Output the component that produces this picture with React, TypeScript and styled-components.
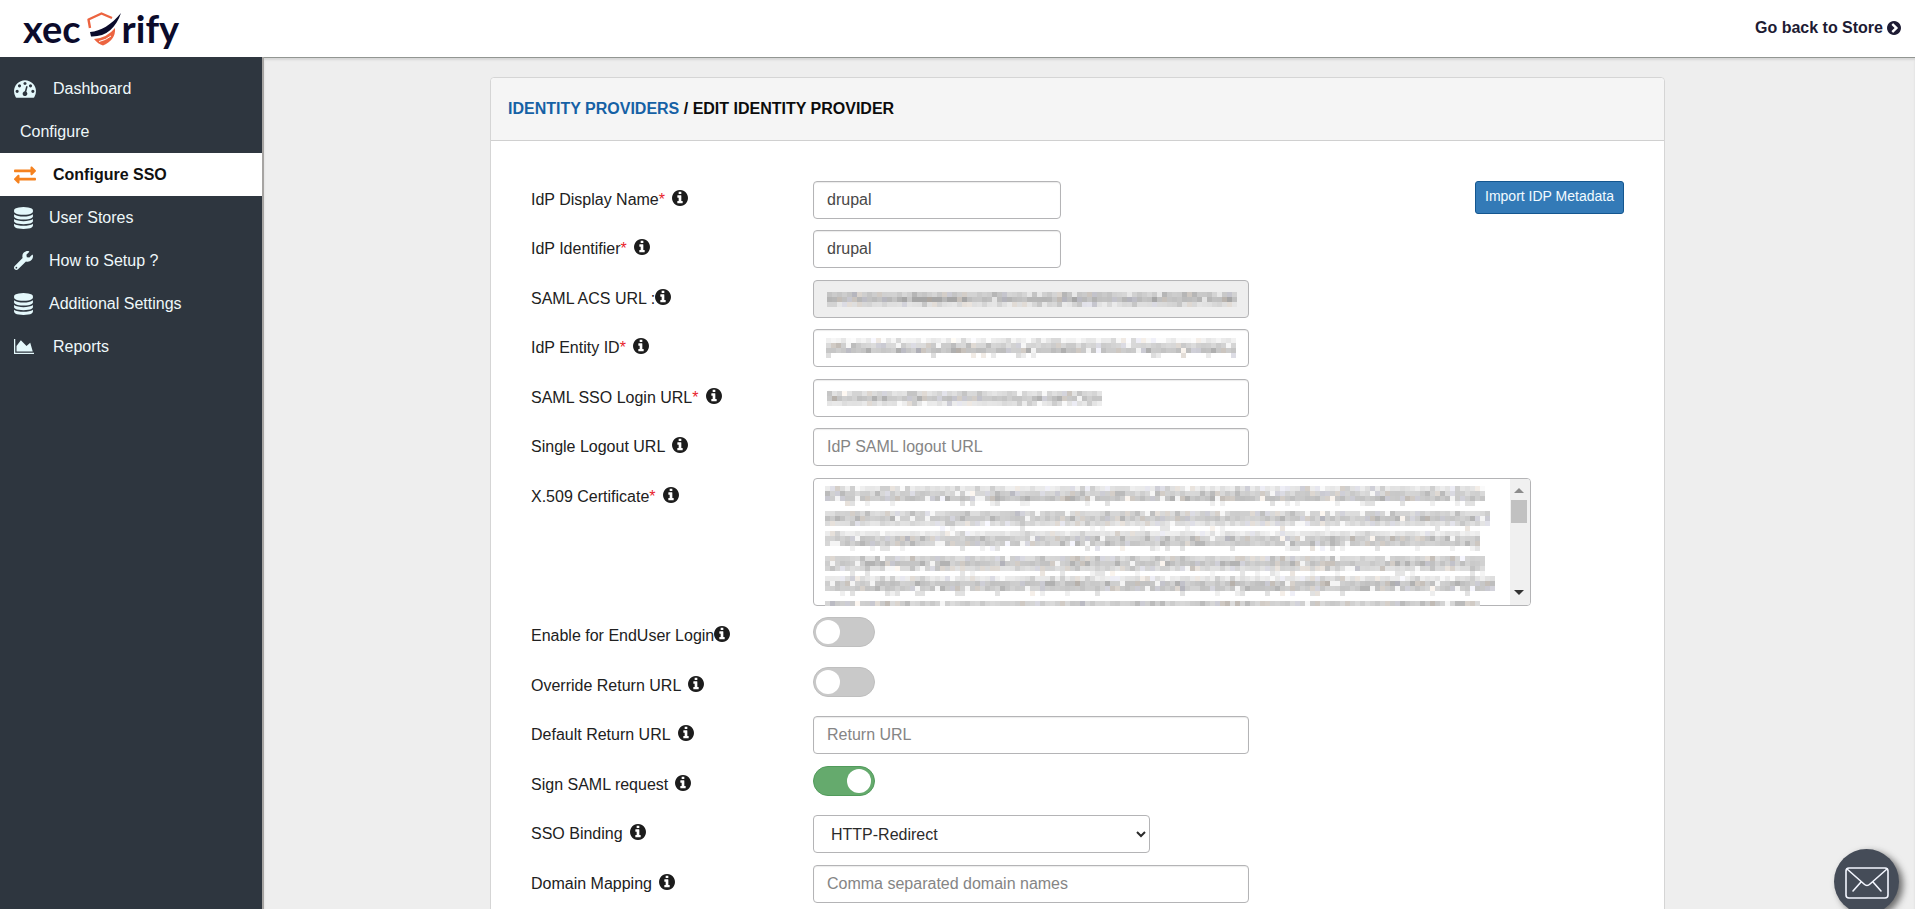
import React from "react";
import styled, { createGlobalStyle } from "styled-components";
import { FaExchangeAlt, FaWrench } from "react-icons/fa";

const GlobalStyle = createGlobalStyle`
  *, *::before, *::after { box-sizing: border-box; }
  body {
    margin: 0;
    font-family: "Liberation Sans", Arial, Helvetica, sans-serif;
    font-size: 16px;
    line-height: 22px;
    color: #212121;
    background: #eeeeee;
  }
  input, textarea, select, button { font: inherit; color: inherit; margin: 0; }
`;

/* ---------- shell ---------- */

const Shell = styled.div`
  display: flex;
  flex-direction: column;
  height: 100vh;
  overflow: hidden;
`;

const TopBar = styled.header`
  display: flex;
  flex: none;
  align-items: center;
  justify-content: space-between;
  height: 57px;
  padding: 0 14px 0 23px;
  background: #ffffff;
`;

const Brand = styled.a`
  display: flex;
  align-items: center;
  padding-bottom: 2px;
  color: #0b0b2b;
  font-family: Lato, sans-serif;
  font-weight: 700;
  font-size: 38px;
  line-height: 50px;
  text-decoration: none;
`;

const BrandMark = styled.svg`
  width: 36px;
  height: 36px;
  margin-left: 5px;
`;

const StoreLink = styled.a`
  display: flex;
  align-items: center;
  gap: 4px;
  color: #1d1b33;
  font-weight: 700;
  text-decoration: none;
  padding-bottom: 2px;
`;

const Columns = styled.div`
  display: flex;
  flex: 1;
  min-height: 0;
`;

const SideBar = styled.nav`
  flex: none;
  width: 264px;
  padding-top: 10px;
  background: #2e363f;
  border-right: 2px solid #a6a4a2;
`;

const NavItem = styled.a<{ $active?: boolean; $wide?: boolean }>`
  display: flex;
  align-items: center;
  gap: ${(p) => (p.$wide ? 17 : 16)}px;
  height: 43px;
  padding-left: 14px;
  color: ${(p) => (p.$active ? "#111111" : "#eef8fa")};
  background: ${(p) => (p.$active ? "#ffffff" : "transparent")};
  font-weight: ${(p) => (p.$active ? 700 : 400)};
  text-decoration: none;
  svg {
    flex: none;
    color: ${(p) => (p.$active ? "#f5821f" : "#e4f8fb")};
  }
`;

const NavHeading = styled.div`
  display: flex;
  align-items: center;
  height: 43px;
  padding-left: 20px;
  color: #eef8fa;
`;

const Main = styled.main`
  flex: 1;
  min-width: 0;
  padding: 19px 250px 0 226px;
  overflow-y: auto;
  scrollbar-width: none;
  border-top: 1px solid #929692;
  box-shadow: inset 0 2px 2px #d6d6d6;
`;

/* ---------- panel ---------- */

const Panel = styled.section`
  background: #ffffff;
  border: 1px solid #d5d5d5;
  border-radius: 4px;
`;

const PanelHeader = styled.h1`
  margin: 0;
  padding: 20px 17px;
  font-size: 16px;
  line-height: 22px;
  font-weight: 700;
  color: #0c0c0c;
  background: #f5f5f5;
  border-bottom: 1px solid #d0d0d0;
  border-radius: 4px 4px 0 0;
  a {
    color: #1561a5;
    text-decoration: none;
  }
`;

const Form = styled.form`
  padding: 40px 40px 28px;
`;

const Row = styled.div`
  display: flex;
  align-items: flex-start;
  padding-bottom: 11px;
  &:nth-child(even) {
    padding-bottom: 12px;
  }
`;

const Label = styled.label<{ $tight?: boolean }>`
  display: flex;
  flex: none;
  align-items: center;
  gap: ${(p) => (p.$tight ? 0 : 7)}px;
  width: 282px;
  height: 38px;
  em {
    color: #e8232b;
    font-style: normal;
  }
  svg {
    flex: none;
    color: #1c1c1c;
    margin-bottom: 4px;
  }
`;

const ControlSlot = styled.div`
  position: relative;
  display: flex;
  min-height: 38px;
`;

const TextBox = styled.input<{ $short?: boolean }>`
  width: ${(p) => (p.$short ? 248 : 436)}px;
  height: 38px;
  padding: 0 13px;
  color: #484848;
  background: #ffffff;
  border: 1px solid #b4b4b6;
  border-radius: 4px;
  box-shadow: inset 0 1px 1px #ececec;
  &::placeholder {
    color: #858585;
    opacity: 1;
  }
  &:read-only {
    background: #eeeeee;
  }
`;

const Select = styled.select`
  width: 337px;
  height: 38px;
  padding: 0 13px;
  color: #2b2b2b;
  background: #ffffff;
  border: 1px solid #b4b4b6;
  border-radius: 4px;
`;

const CertificateBox = styled.textarea`
  width: 718px;
  height: 128px;
  padding: 6px 12px;
  background: #ffffff;
  border: 1px solid #b4b4b6;
  border-radius: 4px;
  resize: none;
  overflow: hidden;
`;

const Toggle = styled.input`
  appearance: none;
  position: relative;
  width: 62px;
  height: 30px;
  background: #c9c9c9;
  border: 1px solid #bfbfbf;
  border-radius: 15px;
  &::before {
    content: "";
    position: absolute;
    top: 2px;
    left: 2px;
    width: 24px;
    height: 24px;
    border-radius: 50%;
    background: #ffffff;
  }
  &:checked {
    background: #65aa6d;
    border-color: #519b5b;
  }
  &:checked::before {
    left: 33px;
  }
`;

const ImportButton = styled.button`
  flex: none;
  width: 149px;
  height: 33px;
  margin-left: auto;
  padding: 0 0 3px;
  font-size: 14px;
  line-height: 20px;
  white-space: nowrap;
  color: #f2fbff;
  background: #337ab7;
  border: 1px solid #14568f;
  border-radius: 3px;
`;

const MaskLayer = styled.svg<{ $top: number; $left: number }>`
  position: absolute;
  top: ${(p) => p.$top}px;
  left: ${(p) => p.$left}px;
  pointer-events: none;
`;

const ScrollTrack = styled.div`
  position: absolute;
  top: 1px;
  right: 1px;
  display: flex;
  flex-direction: column;
  align-items: center;
  justify-content: space-between;
  width: 20px;
  height: 126px;
  padding: 9px 2px 10px 0;
  background: #f0f0f0;
  border-radius: 0 3px 3px 0;
`;

const ScrollThumb = styled.div`
  width: 16px;
  height: 23px;
  margin: 7px 0 auto;
  background: #c1c1c1;
`;

const MailButton = styled.button`
  position: fixed;
  right: 16px;
  bottom: -5px;
  display: flex;
  align-items: center;
  justify-content: center;
  width: 65px;
  height: 65px;
  padding: 2px 0 0;
  color: #f3f6ff;
  background: #454c58;
  border: 0;
  border-radius: 50%;
  box-shadow: 4px 3px 7px #6a6a6a;
`;

/* ---------- icons ---------- */

const Icon = ({ d, box, w, h }: { d: string; box: string; w: number; h: number }) => (
  <svg viewBox={box} width={w} height={h} fill="currentColor" aria-hidden="true">
    <path d={d} />
  </svg>
);

const GaugeIcon = () => (
  <Icon
    box="0 256 1792 1408"
    w={22}
    h={18}
    d="M384 1152q0-53-37.5-90.5t-90.5-37.5-90.5 37.5-37.5 90.5 37.5 90.5 90.5 37.5 90.5-37.5 37.5-90.5zm192-448q0-53-37.5-90.5t-90.5-37.5-90.5 37.5-37.5 90.5 37.5 90.5 90.5 37.5 90.5-37.5 37.5-90.5zm428 481l101-382q6-26-7.500-48.500t-38.500-29.500-48 6.500-30 39.500l-101 382q-60 5-107 43.500t-63 98.500q-20 77 20 146t117 89 146-20 89-117q16-60-6-117t-72-91zm660-33q0-53-37.500-90.500t-90.500-37.500-90.500 37.500-37.500 90.500 37.500 90.500 90.500 37.500 90.500-37.500 37.500-90.500zm-640-640q0-53-37.500-90.500t-90.500-37.500-90.500 37.500-37.500 90.500 37.500 90.500 90.500 37.500 90.500-37.500 37.500-90.500zm448 192q0-53-37.500-90.500t-90.500-37.500-90.500 37.500-37.500 90.500 37.500 90.500 90.500 37.500 90.500-37.500 37.500-90.500zm320 448q0 261-141 483-19 29-54 29h-1402q-35 0-54-29-141-221-141-483 0-182 71-348t191-286 286-191 348-71 348 71 286 191 191 286 71 348z"
  />
);

const DatabaseIcon = () => (
  <Icon
    box="0 0 1536 1792"
    w={19}
    h={22}
    d="M768 768q237 0 443-43t325-127v170q0 69-103 128t-280 93.500-385 34.500-385-34.500-280-93.500-103-128v-170q119 84 325 127t443 43zm0 768q237 0 443-43t325-127v170q0 69-103 128t-280 93.500-385 34.500-385-34.500-280-93.500-103-128v-170q119 84 325 127t443 43zm0-384q237 0 443-43t325-127v170q0 69-103 128t-280 93.500-385 34.500-385-34.500-280-93.500-103-128v-170q119 84 325 127t443 43zm0-1152q208 0 385 34.500t280 93.500 103 128v128q0 69-103 128t-280 93.500-385 34.500-385-34.500-280-93.500-103-128v-128q0-69 103-128t280-93.500 385-34.500z"
  />
);

const ChartIcon = () => (
  <Icon
    box="0 128 2253 1536"
    w={22}
    h={15}
    d="M2048 1536v128h-2048v-1536h128v1408h1920zm-384-1024l256 896h-1664v-576l448-576 576 576z"
  />
);

const InfoIcon = () => (
  <Icon
    box="128 128 1536 1536"
    w={16}
    h={16}
    d="M1152 1376v-160q0-14-9-23t-23-9h-96v-512q0-14-9-23t-23-9h-320q-14 0-23 9t-9 23v160q0 14 9 23t23 9h96v320h-96q-14 0-23 9t-9 23v160q0 14 9 23t23 9h448q14 0 23-9t9-23zm-128-896v-160q0-14-9-23t-23-9h-192q-14 0-23 9t-9 23v160q0 14 9 23t23 9h192q14 0 23-9t9-23zm640 416q0 209-103 385.500t-279.500 279.500-385.500 103-385.500-103-279.500-279.500-103-385.500 103-385.500 279.500-279.500 385.500-103 385.500 103 279.500 279.500 103 385.500z"
  />
);

const ChevronCircleIcon = () => (
  <Icon
    box="128 128 1536 1536"
    w={14}
    h={14}
    d="M845 1395l454-454q19-19 19-45t-19-45l-454-454q-19-19-45-19t-45 19l-102 102q-19 19-19 45t19 45l307 307-307 307q-19 19-19 45t19 45l102 102q19 19 45 19t45-19zm819-499q0 209-103 385.500t-279.500 279.500-385.500 103-385.500-103-279.500-279.500-103-385.500 103-385.500 279.500-279.500 385.500-103 385.500 103 279.500 279.500 103 385.500z"
  />
);

const Shield = () => (
  <BrandMark viewBox="0 0 36 36" fill="none" aria-hidden="true">
    <path d="M4 18 L2.500 9.500 L15.500 3.500 L26 8" stroke="#ec6440" strokeWidth="2.400" strokeLinejoin="round" />
    <path d="M4 22 C15 21 25 15 35 3 C30 18 20 27 5 26.500 Z" fill="#0b0b2b" />
    <path d="M8 29 Q21 28 29 18 Q30 30 17 35.500 Q12 34 8 29 Z" fill="#ec6440" />
    <path d="M13 31.500 Q20 30 25 26" stroke="#ffffff" strokeWidth="1" />
  </BrandMark>
);

/* ---------- pixelated masks over private values ---------- */

type MaskLine = { y: number; cols: number; bands: number[]; seed: number };

const CELL = 5;

// A stable scatter value between 0 and 1 for a cell.
const noise = (x: number, y: number, seed: number) => {
  const v = Math.sin(x * 12.9898 + y * 78.233 + seed * 37.719) * 43758.5453;
  return v - Math.floor(v);
};

const Mask = ({ top, left, lines, base = 255 }: { top: number; left: number; lines: MaskLine[]; base?: number }) => {
  const width = Math.max(...lines.map((l) => l.cols)) * CELL;
  const height = Math.max(...lines.map((l) => l.y + l.bands.length * CELL));
  return (
    <MaskLayer $top={top} $left={left} width={width} height={height} shapeRendering="crispEdges" aria-hidden="true">
      {lines.flatMap((line) =>
        line.bands.flatMap((depth, r) =>
          Array.from({ length: line.cols }, (_, c) => {
            const n = noise(c, r, line.seed);
            if (depth < 15 && n < 0.8) return null;
            const extra = n > 0.9 ? 22 : n < 0.06 ? -depth * 0.8 : (n - 0.5) * 24;
            const level = Math.round(Math.min(base, base - depth - extra));
            const tint = Math.floor(noise(r, c, line.seed + 5) * 12);
            const red = tint === 1 ? 6 : 0;
            const blue = tint === 2 ? 8 : tint === 1 ? -6 : 0;
            return (
              <rect
                key={`${line.y}-${r}-${c}`}
                x={c * CELL}
                y={line.y + r * CELL}
                width={CELL}
                height={CELL}
                fill={`rgb(${level + red},${level},${level + blue})`}
              />
            );
          })
        )
      )}
    </MaskLayer>
  );
};

const certificateLines: MaskLine[] = [
  { y: 0, cols: 132, bands: [26, 46, 56, 8], seed: 1 },
  { y: 25, cols: 133, bands: [42, 52, 34, 4], seed: 2 },
  { y: 45, cols: 131, bands: [24, 50, 50, 6], seed: 3 },
  { y: 70, cols: 132, bands: [42, 54, 38, 4], seed: 4 },
  { y: 90, cols: 134, bands: [26, 56, 52, 8], seed: 6 },
  { y: 115, cols: 131, bands: [46], seed: 7 },
];

/* ---------- form ---------- */

type FieldProps = {
  id: string;
  label: string;
  required?: boolean;
  tight?: boolean;
  action?: React.ReactNode;
  children: React.ReactNode;
};

const Field = ({ id, label, required, tight, action, children }: FieldProps) => (
  <Row>
    <Label htmlFor={id} $tight={tight}>
      <span>
        {label}
        {required && <em>*</em>}
      </span>
      <InfoIcon />
    </Label>
    <ControlSlot>{children}</ControlSlot>
    {action}
  </Row>
);

export default function App() {
  return (
    <>
      <GlobalStyle />
      <Shell>
        <TopBar>
          <Brand href="#">
            xec
            <Shield />
            rify
          </Brand>
          <StoreLink href="#">
            Go back to Store
            <ChevronCircleIcon />
          </StoreLink>
        </TopBar>
        <Columns>
          <SideBar>
            <NavItem href="#" $wide>
              <GaugeIcon />
              Dashboard
            </NavItem>
            <NavHeading>Configure</NavHeading>
            <NavItem href="#" $active $wide>
              <FaExchangeAlt size={22} />
              Configure SSO
            </NavItem>
            <NavItem href="#">
              <DatabaseIcon />
              User Stores
            </NavItem>
            <NavItem href="#">
              <FaWrench size={19} />
              How to Setup ?
            </NavItem>
            <NavItem href="#">
              <DatabaseIcon />
              Additional Settings
            </NavItem>
            <NavItem href="#" $wide>
              <ChartIcon />
              Reports
            </NavItem>
          </SideBar>
          <Main>
            <Panel>
              <PanelHeader>
                <a href="#">IDENTITY PROVIDERS</a> / EDIT IDENTITY PROVIDER
              </PanelHeader>
              <Form>
                <Field
                  id="name"
                  label="IdP Display Name"
                  required
                  action={<ImportButton type="button">Import IDP Metadata</ImportButton>}
                >
                  <TextBox id="name" $short defaultValue="drupal" />
                </Field>
                <Field id="identifier" label="IdP Identifier" required>
                  <TextBox id="identifier" $short defaultValue="drupal" />
                </Field>
                <Field id="acs" label="SAML ACS URL :" tight>
                  <TextBox id="acs" readOnly />
                  <Mask top={12} left={14} base={238} lines={[{ y: 0, cols: 82, bands: [34, 50, 18], seed: 11 }]} />
                </Field>
                <Field id="entity" label="IdP Entity ID" required>
                  <TextBox id="entity" />
                  <Mask top={9} left={13} lines={[{ y: 0, cols: 82, bands: [16, 44, 58, 12], seed: 12 }]} />
                </Field>
                <Field id="login" label="SAML SSO Login URL" required>
                  <TextBox id="login" />
                  <Mask top={12} left={14} lines={[{ y: 0, cols: 55, bands: [36, 56, 28], seed: 13 }]} />
                </Field>
                <Field id="logout" label="Single Logout URL">
                  <TextBox id="logout" placeholder="IdP SAML logout URL" />
                </Field>
                <Field id="certificate" label="X.509 Certificate" required>
                  <CertificateBox id="certificate" />
                  <Mask top={8} left={12} lines={certificateLines} />
                  <ScrollTrack aria-hidden="true">
                    <svg width="10" height="5">
                      <path d="M0 5 L5 0 L10 5 Z" fill="#8c8c8c" />
                    </svg>
                    <ScrollThumb />
                    <svg width="10" height="5">
                      <path d="M0 0 L5 5 L10 0 Z" fill="#333333" />
                    </svg>
                  </ScrollTrack>
                </Field>
                <Field id="enduser" label="Enable for EndUser Login" tight>
                  <Toggle id="enduser" type="checkbox" />
                </Field>
                <Field id="override" label="Override Return URL">
                  <Toggle id="override" type="checkbox" />
                </Field>
                <Field id="return" label="Default Return URL">
                  <TextBox id="return" placeholder="Return URL" />
                </Field>
                <Field id="sign" label="Sign SAML request">
                  <Toggle id="sign" type="checkbox" defaultChecked />
                </Field>
                <Field id="binding" label="SSO Binding">
                  <Select id="binding" defaultValue="redirect">
                    <option value="redirect">HTTP-Redirect</option>
                    <option value="post">HTTP-POST</option>
                  </Select>
                </Field>
                <Field id="domain" label="Domain Mapping">
                  <TextBox id="domain" placeholder="Comma separated domain names" />
                </Field>
              </Form>
            </Panel>
          </Main>
        </Columns>
        <MailButton type="button" aria-label="Contact us">
          <svg width="44" height="32" viewBox="0 0 44 32" fill="none" stroke="currentColor" strokeWidth="1.600" strokeLinejoin="round" strokeLinecap="round" aria-hidden="true">
            <rect x="1" y="1" width="42" height="30" rx="3" />
            <path d="M2 2 L19 17 Q22 20 25 17 L42 2 M16 15 L8 24 M28 15 L36 24" />
          </svg>
        </MailButton>
      </Shell>
    </>
  );
}
